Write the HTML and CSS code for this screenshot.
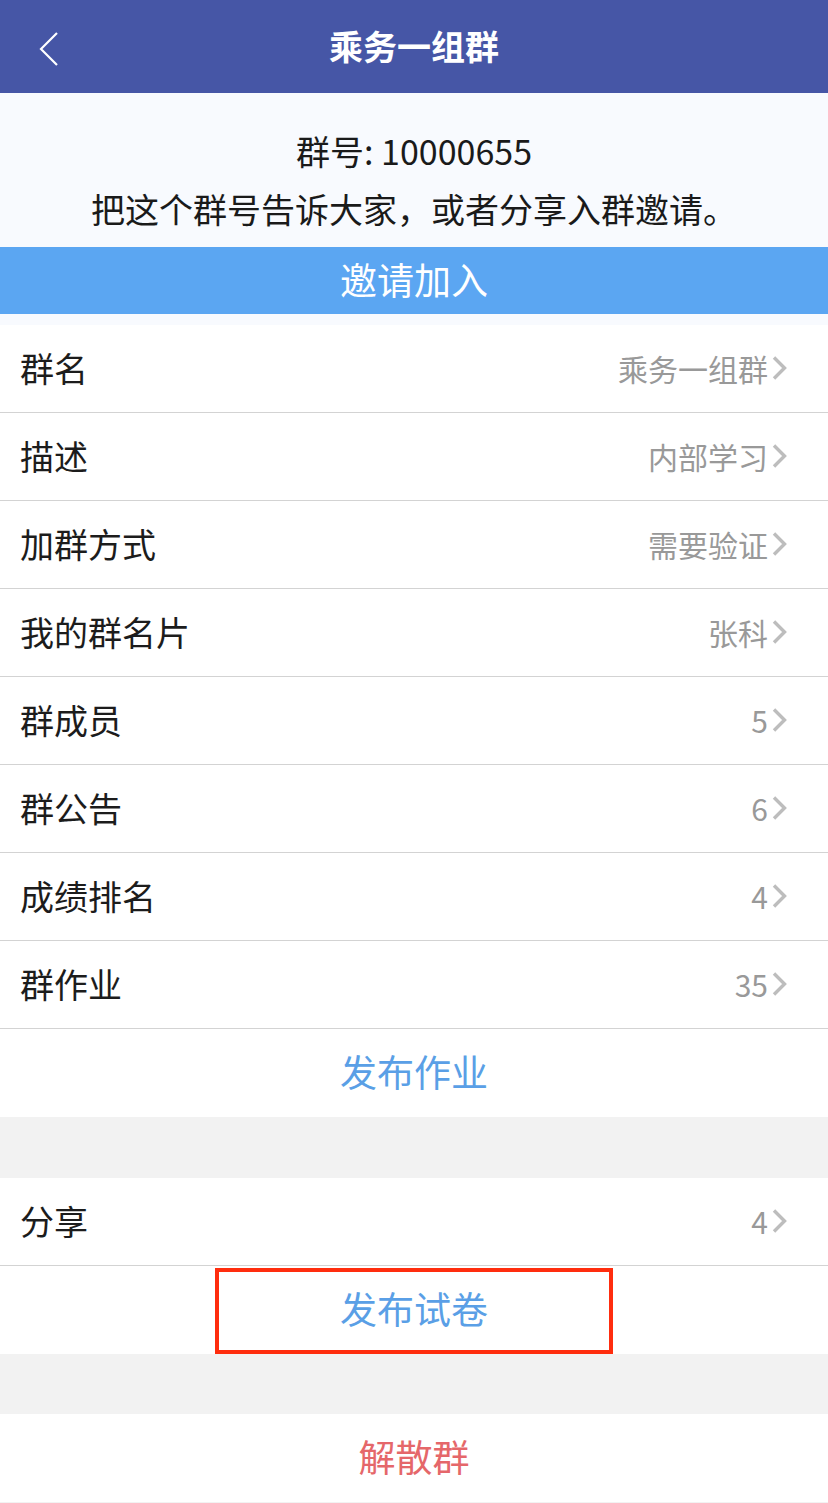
FILE: index.html
```html
<!DOCTYPE html>
<html>
<head>
    <title>乘务一组群</title>
    <link rel="stylesheet" href="styles.css">
</head>
<body>
    <div class="page">
        <div class="navbar">
            <span class="back">
                <svg width="20" height="34" viewBox="0 0 20 34"><path d="M18 1 L2 17 L18 33" fill="none" stroke="#fff" stroke-width="2.2"/></svg>
            </span>
            <span class="nav-title">乘务一组群</span>
        </div>

        <div class="info">
            <div class="info-line">群号: 10000655</div>
            <div class="info-line">把这个群号告诉大家，或者分享入群邀请。</div>
        </div>
        <div class="invite">邀请加入</div>
        <div class="info-gap"></div>

        <div class="group">
            <div class="row"><span class="label">群名</span><span class="value">乘务一组群<svg class="arrow" width="15" height="24" viewBox="0 0 15 24"><path d="M2 1.5 L12.5 12 L2 22.5" fill="none" stroke="#bdbdbd" stroke-width="3.4"/></svg></span></div>
            <div class="row"><span class="label">描述</span><span class="value">内部学习<svg class="arrow" width="15" height="24" viewBox="0 0 15 24"><path d="M2 1.5 L12.5 12 L2 22.5" fill="none" stroke="#bdbdbd" stroke-width="3.4"/></svg></span></div>
            <div class="row"><span class="label">加群方式</span><span class="value">需要验证<svg class="arrow" width="15" height="24" viewBox="0 0 15 24"><path d="M2 1.5 L12.5 12 L2 22.5" fill="none" stroke="#bdbdbd" stroke-width="3.4"/></svg></span></div>
            <div class="row"><span class="label">我的群名片</span><span class="value">张科<svg class="arrow" width="15" height="24" viewBox="0 0 15 24"><path d="M2 1.5 L12.5 12 L2 22.5" fill="none" stroke="#bdbdbd" stroke-width="3.4"/></svg></span></div>
            <div class="row"><span class="label">群成员</span><span class="value">5<svg class="arrow" width="15" height="24" viewBox="0 0 15 24"><path d="M2 1.5 L12.5 12 L2 22.5" fill="none" stroke="#bdbdbd" stroke-width="3.4"/></svg></span></div>
            <div class="row"><span class="label">群公告</span><span class="value">6<svg class="arrow" width="15" height="24" viewBox="0 0 15 24"><path d="M2 1.5 L12.5 12 L2 22.5" fill="none" stroke="#bdbdbd" stroke-width="3.4"/></svg></span></div>
            <div class="row"><span class="label">成绩排名</span><span class="value">4<svg class="arrow" width="15" height="24" viewBox="0 0 15 24"><path d="M2 1.5 L12.5 12 L2 22.5" fill="none" stroke="#bdbdbd" stroke-width="3.4"/></svg></span></div>
            <div class="row"><span class="label">群作业</span><span class="value">35<svg class="arrow" width="15" height="24" viewBox="0 0 15 24"><path d="M2 1.5 L12.5 12 L2 22.5" fill="none" stroke="#bdbdbd" stroke-width="3.4"/></svg></span></div>
            <div class="row action blue last">发布作业</div>
        </div>

        <div class="gap"></div>

        <div class="group">
            <div class="row"><span class="label">分享</span><span class="value">4<svg class="arrow" width="15" height="24" viewBox="0 0 15 24"><path d="M2 1.5 L12.5 12 L2 22.5" fill="none" stroke="#bdbdbd" stroke-width="3.4"/></svg></span></div>
            <div class="row action blue last highlight">
                发布试卷
                <span class="mark"></span>
            </div>
        </div>

        <div class="gap"></div>

        <div class="group">
            <div class="row action red last">解散群</div>
        </div>
    </div>
</body>
</html>
```

FILE: styles.css
```css
* {
    box-sizing: border-box;
    font-family: "Noto Sans CJK SC", "Noto Sans", sans-serif;
}
body {
    margin: 0;
    background-color: #f2f2f2;
}
.page {
    width: 828px;
}
.navbar {
    height: 93px;
    background-color: #4656a6;
    display: flex;
    align-items: center;
    justify-content: center;
    position: relative;
}
.back {
    position: absolute;
    left: 39px;
    top: 32px;
    line-height: 0;
}
.nav-title {
    color: #fff;
    font-size: 34px;
    font-weight: bold;
    line-height: 1;
    margin-top: -1px;
}
.info {
    height: 154px;
    background-color: #f8fafe;
    display: flex;
    flex-direction: column;
    align-items: center;
    padding-top: 36px;
    gap: 14px;
}
.info-line {
    font-size: 34px;
    line-height: 44px;
    color: #1a1a1a;
}
.invite {
    height: 67px;
    background-color: #5ba6f2;
    color: #fff;
    font-size: 37px;
    line-height: 64px;
    text-align: center;
}
.info-gap {
    height: 11px;
    background-color: #f8fafe;
}
.group {
    background-color: #fff;
}
.row {
    height: 88px;
    border-bottom: 1px solid #d3d3d3;
    display: flex;
    align-items: center;
    justify-content: space-between;
    padding: 0 41px 0 20px;
}
.row.last {
    border-bottom: none;
}
.label {
    font-size: 34px;
    color: #1c1c1c;
    margin-top: -3px;
}
.value {
    font-size: 30px;
    color: #999;
    display: flex;
    align-items: center;
    margin-top: -2px;
}
.arrow {
    display: block;
    margin-left: 4px;
    margin-top: 1px;
}
.action {
    justify-content: center;
    font-size: 37px;
    padding: 0 0 4px;
}
.blue {
    color: #5a9fe6;
}
.red {
    color: #e5676a;
}
.highlight {
    position: relative;
}
.mark {
    position: absolute;
    left: 215px;
    top: 2px;
    width: 398px;
    height: 86px;
    border: 4px solid #ff2d0e;
}
.gap {
    height: 61px;
}
.gap + .group + .gap {
    height: 60px;
}
```
